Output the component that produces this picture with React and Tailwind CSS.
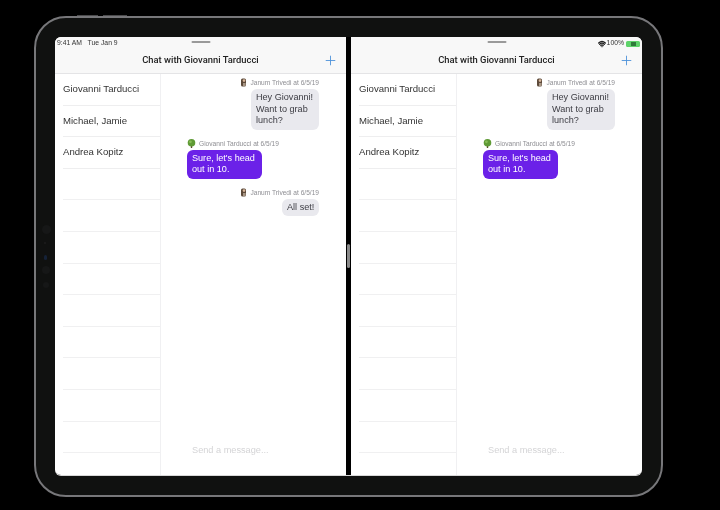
import { Plus, Wifi } from 'lucide-react';

const contacts = ['Giovanni Tarducci', 'Michael, Jamie', 'Andrea Kopitz'];
const emptyRows = 9;

const TreeAvatar = () => (
  <svg width="9" height="9" viewBox="0 0 9 9" className="shrink-0">
    <rect x="3.8" y="6" width="1.4" height="3" fill="#5b4a2c" />
    <circle cx="4.5" cy="3.8" r="3.8" fill="#5f9a35" />
    <circle cx="3.4" cy="2.8" r="1.4" fill="#86bb55" />
  </svg>
);

const PersonAvatar = () => (
  <svg width="7" height="9" viewBox="0 0 7 9" className="shrink-0">
    <rect x="1" y="0.5" width="5" height="8" rx="1.5" fill="#5d4a3a" />
    <circle cx="4" cy="2.6" r="1.3" fill="#d8b79c" />
    <rect x="3" y="5" width="2.6" height="3" fill="#a89786" />
  </svg>
);

const Meta = ({ name, tree }) => (
  <div className="flex h-[9px] items-center gap-[2px] text-[6.6px] leading-[9px] text-[#8e8e93]">
    {tree ? <TreeAvatar /> : <PersonAvatar />}
    <span className="ml-[1px]">{name} at 6/5/19</span>
  </div>
);

const Incoming = ({ children }) => (
  <div className="flex flex-col items-start">
    <Meta name="Giovanni Tarducci" tree />
    <div className="mt-[2px] w-[75px] whitespace-nowrap rounded-[6px] bg-[#6b21e8] px-[5px] py-[3px] text-[9.1px] leading-[11.7px] text-white">
      {children}
    </div>
  </div>
);

const Outgoing = ({ children, width }) => (
  <div className="flex flex-col items-end">
    <Meta name="Janum Trivedi" />
    <div className={`mt-[2px] whitespace-nowrap rounded-[6px] bg-[#e9e9ee] px-[5px] py-[3px] text-[9.1px] leading-[11.7px] text-[#3c3c43] ${width}`}>
      {children}
    </div>
  </div>
);

const Pane = ({ showAllSet, status }) => (
  <div className="flex h-full w-[291px] flex-col bg-white">
    <div className="relative h-[37px] shrink-0 border-b border-[#e4e4e6] bg-[#f8f8f8]">
      <div className="flex h-[11px] items-center justify-between px-[2px] pt-[2px] text-[6.8px] text-[#333]">
        {status}
      </div>
      <div className="absolute left-1/2 top-[4px] h-[2px] w-[19px] -translate-x-1/2 rounded-full bg-[#9a9a9a]" />
      <div className="flex h-[24px] items-center justify-center font-['Roboto',sans-serif] text-[9.4px] font-medium text-[#222]">
        Chat with Giovanni Tarducci
      </div>
      <Plus className="absolute right-[8px] top-[16px] h-[15px] w-[15px] text-[#4a90d9]" strokeWidth={1.4} />
    </div>
    <div className="flex min-h-0 flex-1">
      <div className="w-[106px] shrink-0 border-r border-[#f0f0f2] pl-[8px]">
        {contacts.map((name) => (
          <div key={name} className="flex h-[31.6px] items-center border-b border-[#eeeeef] text-[9.6px] text-[#333]">
            {name}
          </div>
        ))}
        {Array.from({ length: emptyRows }, (_, i) => (
          <div key={i} className="h-[31.6px] border-b border-[#f0f0f1]" />
        ))}
      </div>
      <div className="flex min-w-0 flex-1 flex-col pl-[26px] pr-[27px] pt-[4px]">
        <div className="flex flex-1 flex-col gap-[8.6px]">
          <Outgoing width="w-[68px]">Hey Giovanni!<br />Want to grab<br />lunch?</Outgoing>
          <Incoming>Sure, let's head<br />out in 10.</Incoming>
          {showAllSet && <Outgoing width="w-[37px]">All set!</Outgoing>}
        </div>
        <div className="mb-[19px] ml-[5px] text-[9.2px] leading-[12px] text-[#d4d4d6]">Send a message...</div>
      </div>
    </div>
  </div>
);

export default function App() {
  return (
    <div className="h-[510px] w-[720px] overflow-hidden bg-black pl-[34px] pt-[16px] font-['Liberation_Sans','Inter',sans-serif] blur-[0.6px]">
      <div className="relative h-[481px] w-[629px] rounded-[32px] border-2 border-[#77777a] bg-[#101110] p-[19px]">
        {/* top buttons */}
        <div className="absolute left-[41px] top-[-3px] h-[1px] w-[21px] bg-[#4a4a4c]" />
        <div className="absolute left-[67px] top-[-3px] h-[1px] w-[24px] bg-[#4a4a4c]" />
        {/* camera and sensors */}
        <div className="absolute left-[6px] top-[207px] h-[9px] w-[9px] rounded-full bg-[#161717]" />
        <div className="absolute left-[8px] top-[224px] h-[2px] w-[2px] rounded-full bg-[#1c1c1c]" />
        <div className="absolute left-[8px] top-[237px] h-[5px] w-[3px] rounded-full bg-[#152238]" />
        <div className="absolute left-[6px] top-[248px] h-[8px] w-[8px] rounded-full bg-[#161717]" />
        <div className="absolute left-[7px] top-[264px] h-[6px] w-[6px] rounded-full bg-[#161717]" />

        <div className="flex h-[439px] w-[587px] overflow-hidden rounded-[6px] border-b border-[#d8d8d8] bg-black">
          <Pane showAllSet status={<span>9:41 AM&nbsp;&nbsp;&nbsp;Tue Jan 9</span>} />
          <div className="relative w-[5px] shrink-0 bg-black">
            <div className="absolute left-[1px] top-[207px] h-[24px] w-[3px] rounded-full bg-[#8a8a8a]" />
          </div>
          <Pane
            status={
              <div className="ml-auto flex items-center gap-[1px]">
                <Wifi className="h-[8px] w-[8px] text-[#222]" strokeWidth={4} />
                <span>100%</span>
                <div className="ml-[1px] h-[6px] w-[14px] rounded-[1.5px] bg-[#5ed36a] p-[1px]">
                  <div className="ml-[4px] h-full w-[5px] bg-[#2f7a3a]" />
                </div>
              </div>
            }
          />
        </div>
      </div>
    </div>
  );
}
